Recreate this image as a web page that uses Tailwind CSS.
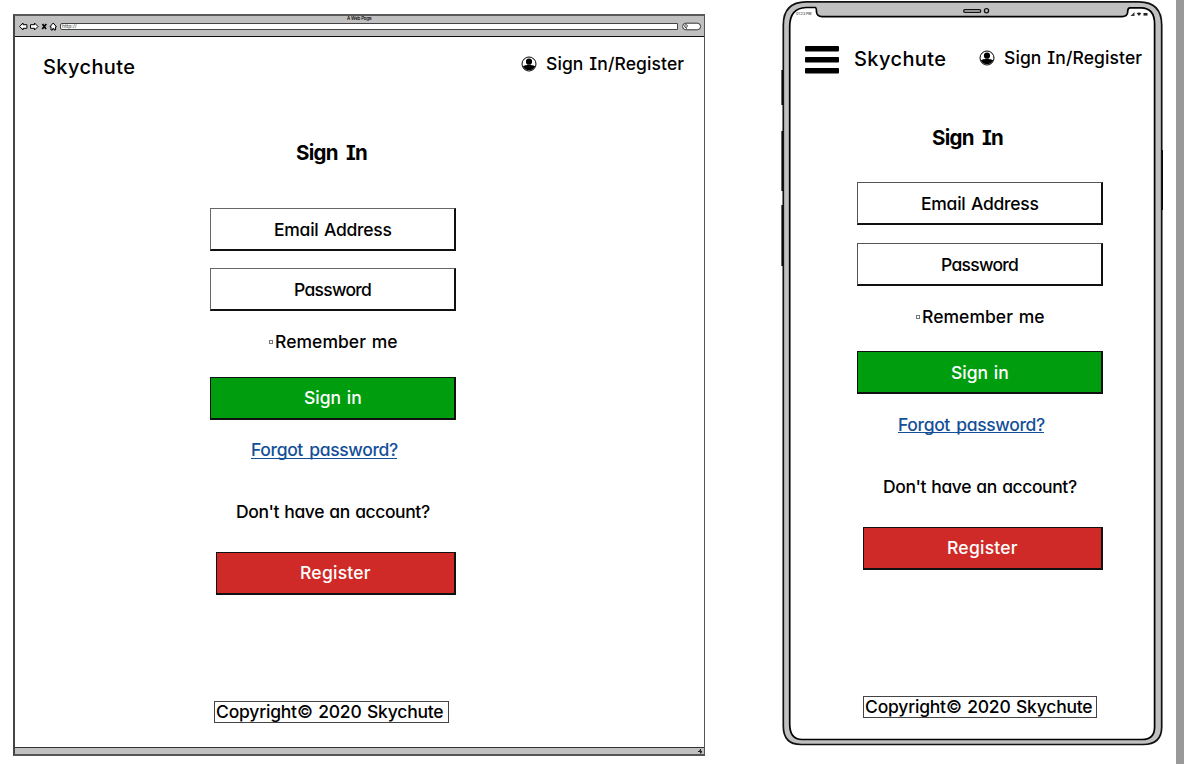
<!DOCTYPE html>
<html lang="en">
<head>
<meta charset="utf-8">
<title>Skychute – Sign In</title>
<script src="https://cdn.jsdelivr.net/npm/@tailwindcss/browser@4"></script>
</head>
<body class="flex h-[764px] w-[1184px] overflow-hidden bg-white font-['Inter',sans-serif] text-[17.5px] leading-6 font-[450] whitespace-nowrap text-black [font-feature-settings:'cv08','cv11']">

  <!-- Desktop browser -->
  <section class="mt-3.5 ml-[13px] flex h-[742px] w-[691.5px] flex-none flex-col border-t-2 border-r border-b-2 border-l-2 border-t-[#5a5a5a] border-r-[#555] border-b-[#555] border-l-[#444]">
    <div class="flex h-[21px] flex-none flex-col border-b border-[#111] bg-[#c0c0c0]">
      <div class="h-[5px] text-center text-[4.5px] leading-[6px] tracking-[-0.2px]">A Web Page</div>
      <div class="flex h-[11px] items-center pl-1">
        <svg class="h-[9px] w-[41px] flex-none" viewBox="0 0 41 9" fill="#fff" stroke="#000" stroke-width="1" stroke-linejoin="round">
          <path d="M.6 4.500 4 1v1.700h3.900v3.600H4V8z"/>
          <path d="M19 4.500 15.500 1v1.700h-4v3.600h4V8z"/>
          <path d="M23.500 2 27 7M27.300 2 23.200 7" stroke-width="1.700"/>
          <path d="M31 4.700 34.200 1l3.200 3.700h-.800V8h-1.500V6.700h-1.500V8h-1.600V4.700z"/>
        </svg>
        <div class="h-[7px] w-[618px] rounded-l-[2px] border border-[#444] bg-white pl-px text-[5px] leading-[5px] text-[#555]">http://</div>
        <svg class="ml-1 h-[9px] w-5 flex-none" viewBox="0 0 20 9" fill="#fff" stroke="#333">
          <rect x=".6" y="1.200" width="18" height="6.600" rx="3.300"/>
          <circle cx="4" cy="4" r="1.400" stroke-width=".8"/><path d="m3 5 1.800 1.700" stroke-width="1"/>
        </svg>
      </div>
    </div>

    <div class="flex min-h-0 flex-1 flex-col">
      <header class="flex pt-[15px] pl-7">
        <div class="mt-[3px] w-[478px] text-xl leading-6 tracking-[0.4px]">Skychute</div>
        <svg class="mt-1 h-4 w-4 flex-none" viewBox="0 0 16 16">
          <circle cx="8" cy="8" r="7" fill="#fff" stroke="#000" stroke-width="1"/>
          <circle cx="8" cy="5.700" r="3.100"/>
          <path d="M1.800 10.200C3.500 9.300 5 9.200 6.300 9h3.400c1.300.2 2.800.3 4.500 1.200A6.900 6.900 0 0 1 1.800 10.200z"/>
        </svg>
        <div class="ml-[9px] tracking-[0.1px] [word-spacing:1px]">Sign In/Register</div>
      </header>

      <main class="mt-[62px] ml-[195px] flex w-[246px] flex-col">
        <h1 class="ml-[86px] text-[20.5px] leading-6 font-bold tracking-[-0.7px] [word-spacing:4px]">Sign In</h1>
        <div class="mt-[43px] flex h-[43px] items-center border-t border-r-2 border-b-2 border-l border-[#111] border-t-[#666] border-l-[#666] pt-px pl-[63px] tracking-[-0.25px] [word-spacing:1px]">Email Address</div>
        <div class="mt-[17px] flex h-[43px] items-center border-t border-r-2 border-b-2 border-l border-[#111] border-t-[#666] border-l-[#666] pt-px pl-[83px] tracking-[-0.7px]">Password</div>
        <label class="mt-[19px] flex items-center pl-[59px] tracking-[0.05px] [word-spacing:1px]"><span class="mr-[2px] size-1 border border-[#777]"></span>Remember me</label>
        <button class="mt-[23px] flex h-[43px] items-center border-t border-r-2 border-b-2 border-l border-[#111] bg-[#009e0f] pl-[93px] text-white [word-spacing:1px]">Sign in</button>
        <a class="mt-[18px] ml-[41px] h-[21px] w-[146px] border-b border-[#134f98] leading-6 tracking-[-0.35px] text-[#134f98] [word-spacing:2px]">Forgot password?</a>
        <p class="mt-[41px] pl-[26px] tracking-[-0.4px] [word-spacing:1px]">Don't have an account?</p>
        <button class="mt-[28px] ml-1.5 flex h-[43px] items-center border-t border-r-2 border-b-2 border-l border-[#111] bg-[#cf2a27] pl-[83px] tracking-[0.25px] text-white">Register</button>
      </main>
      <footer class="mt-[106px] ml-[199px] flex h-[22px] w-[235px] items-center border border-[#444] pl-[1px] tracking-[-0.2px] [word-spacing:1px]">Copyright© 2020 Skychute</footer>
    </div>

    <div class="flex h-[7px] flex-none items-center justify-end border-t border-[#333] bg-[#c0c0c0]">
      <svg class="h-[6px] w-[7px]" viewBox="0 0 7 6" stroke="#222"><path d="M1 3.500h4M3.500 1v4.500M2 2.500l3 2"/></svg>
    </div>
  </section>

  <!-- Phone -->
  <section class="relative ml-[76.5px] flex h-[748px] w-[382px] flex-none flex-col">
    <svg class="absolute inset-0 h-[748px] w-[382px]" viewBox="781 0 382 748" fill="none" stroke="#111">
      <path d="M782.300 70v35M782.300 131v60M782.300 205v61M1162.300 150v60" stroke="#000" stroke-width="1.800"/>
      <path d="M783.300 25Q783.300 2 806 1.800H1139Q1161.700 2 1161.700 25V727Q1161.700 744.500 1143 744.500H801Q783.300 744.500 783.300 726z" fill="#c0c0c0" stroke-width="1.700"/>
      <path d="M789.700 26Q790 8 806 7.500H815Q816.500 7.500 816.500 12Q817 16.500 822 16.600H1122Q1127.500 16.500 1127.700 12Q1127.500 8 1130 7.800H1141Q1154.600 8 1154.600 24V727Q1154.600 739.500 1142 739.500H802Q789.700 739.500 789.700 724z" fill="#fff" stroke="#000" stroke-width="1.700"/>
      <rect x="963.700" y="9.700" width="17" height="2.600" rx="1.200" stroke-width="1.300"/>
      <circle cx="986.500" cy="10.800" r="2.100" stroke-width="1.300"/>
      <path d="M1130.500 16h4v-4z" fill="#333" stroke="none"/>
      <path d="m1136.700 13.300q2.300-1.800 4.600 0l-2.300 2.600z" fill="#222" stroke="none"/>
      <rect x="1143.500" y="13" width="4" height="2.600" fill="#222" stroke="none"/>
    </svg>
    <div class="relative mt-3 h-[5px] pl-[15px] text-[3.5px] leading-[5px] text-[#444]">01:23 PM</div>
    <header class="relative mt-[28px] flex pl-6">
      <svg class="mt-px h-7 w-[34px] flex-none" viewBox="0 0 34 28"><rect width="34" height="5.500" rx="1"/><rect y="11" width="34" height="5.500" rx="1"/><rect y="22" width="34" height="5.500" rx="1"/></svg>
      <div class="mt-[2px] ml-[15px] w-[125px] text-xl leading-6 tracking-[0.4px]">Skychute</div>
      <svg class="mt-[5px] h-4 w-4 flex-none" viewBox="0 0 16 16">
        <circle cx="8" cy="8" r="7" fill="#fff" stroke="#000" stroke-width="1"/>
        <circle cx="8" cy="5.700" r="3.100"/>
        <path d="M1.800 10.200C3.500 9.300 5 9.200 6.300 9h3.400c1.300.2 2.800.3 4.500 1.200A6.900 6.900 0 0 1 1.800 10.200z"/>
      </svg>
      <div class="mt-px ml-[9px] tracking-[0.1px] [word-spacing:1px]">Sign In/Register</div>
    </header>

    <main class="relative mt-[52px] ml-[76px] flex w-[246px] flex-col">
      <h1 class="ml-[75px] text-[20.5px] leading-6 font-bold tracking-[-0.7px] [word-spacing:4px]">Sign In</h1>
      <div class="mt-[32px] flex h-[43px] items-center border-t border-r-2 border-b-2 border-l border-[#111] border-t-[#555] border-l-[#555] pt-px pl-[63px] tracking-[-0.25px] [word-spacing:1px]">Email Address</div>
      <div class="mt-[18px] flex h-[43px] items-center border-t border-r-2 border-b-2 border-l border-[#111] border-t-[#555] border-l-[#555] pt-px pl-[83px] tracking-[-0.7px]">Password</div>
      <label class="mt-[19px] flex items-center pl-[59px] tracking-[0.05px] [word-spacing:1px]"><span class="mr-[2px] size-1 border border-[#777]"></span>Remember me</label>
      <button class="mt-[22px] flex h-[43px] items-center border-t border-r-2 border-b-2 border-l border-[#111] bg-[#009e0f] pt-px pl-[93px] text-white [word-spacing:1px]">Sign in</button>
      <a class="mt-[18px] ml-[41px] h-[21px] w-[146px] border-b border-[#134f98] leading-[25px] tracking-[-0.35px] text-[#134f98] [word-spacing:2px]">Forgot password?</a>
      <p class="mt-[42px] pl-[26px] tracking-[-0.4px] [word-spacing:1px]">Don't have an account?</p>
      <button class="mt-[28px] ml-1.5 flex h-[43px] items-center border-t border-r-2 border-b-2 border-l border-[#111] bg-[#cf2a27] pl-[83px] tracking-[0.25px] text-white">Register</button>
    </main>
    <footer class="relative mt-[126px] ml-[82px] flex h-[22px] w-[234px] items-center border border-[#444] pl-[1px] tracking-[-0.2px] [word-spacing:1px]">Copyright© 2020 Skychute</footer>
  </section>

  <div class="ml-auto h-full w-2 flex-none bg-[#999]"></div>
</body>
</html>
